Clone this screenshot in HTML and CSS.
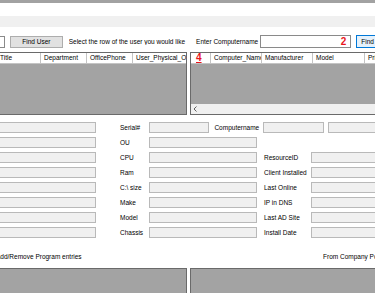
FILE: index.html
```html
<!DOCTYPE html>
<html lang="en">

<head>
  <meta charset="UTF-8" />
  <title>Computer lookup</title>
  <meta name="viewport" content="width=device-width, initial-scale=1.0" />
  <link rel="stylesheet" href="styles.css">
</head>

<body>
  <div class="window">
    <div class="titlebar"></div>
    <div class="menu"></div>

    <div class="search">
      <div class="textbox user"></div>
      <button class="btn find-user">Find User</button>
      <span class="hint">Select the row of the user you would like me</span>
      <span class="label-computer">Enter Computername</span>
      <div class="textbox computer"><span class="mark">2</span></div>
      <button class="btn find focused">Find</button>
    </div>

    <div class="grids">
      <div class="grid users">
        <div class="head">
          <div class="col w44">Title</div>
          <div class="col w46">Department</div>
          <div class="col w46">OfficePhone</div>
          <div class="col w56">User_Physical_Office</div>
        </div>
        <div class="body"></div>
      </div>
      <div class="grid computers">
        <div class="head">
          <div class="col rowhead"><span class="mark under">4</span></div>
          <div class="col w51">Computer_Name</div>
          <div class="col w51">Manufacturer</div>
          <div class="col w52">Model</div>
          <div class="col w51">Primary</div>
        </div>
        <div class="body"></div>
        <div class="hscroll">
          <svg class="arrow" width="4" height="6" viewBox="0 0 4 6"><path d="M3.5 0.5 L1 3 L3.5 5.5" fill="none" stroke="#606060" stroke-width="1"/></svg>
        </div>
      </div>
    </div>

    <div class="form">
      <div class="box"></div><span class="lbl">Serial#</span>
      <div class="split">
        <div class="box s1"></div>
        <span class="lbl cn">Computername</span>
        <div class="box s2"></div>
        <div class="box s3"></div>
      </div>

      <div class="box"></div><span class="lbl">OU</span>
      <div class="box wide"></div>

      <div class="box"></div><span class="lbl">CPU</span>
      <div class="box"></div><span class="lbl">ResourceID</span><div class="box"></div>

      <div class="box"></div><span class="lbl">Ram</span>
      <div class="box"></div><span class="lbl">Client Installed</span><div class="box"></div>

      <div class="box"></div><span class="lbl">C:\ size</span>
      <div class="box"></div><span class="lbl">Last Online</span><div class="box"></div>

      <div class="box"></div><span class="lbl">Make</span>
      <div class="box"></div><span class="lbl">IP in DNS</span><div class="box"></div>

      <div class="box"></div><span class="lbl">Model</span>
      <div class="box"></div><span class="lbl">Last AD Site</span><div class="box"></div>

      <div class="box"></div><span class="lbl">Chassis</span>
      <div class="box"></div><span class="lbl">Install Date</span><div class="box"></div>
    </div>

    <div class="captions">
      <span>Add/Remove Program entries</span>
      <span class="right">From Company Po</span>
    </div>

    <div class="grids bottom">
      <div class="grid users"></div>
      <div class="grid computers"></div>
    </div>
  </div>
</body>

</html>
```

FILE: styles.css
```css
:root {
  /* grid background */
  --grid-bg: #a3a3a3;
  /* grid border */
  --grid-border: #6a6a6a;
  /* read only text box */
  --box-bg: #f0f0f0;
  --box-border: #b9b9b9;
  /* annotation */
  --mark: #e8141c;
}

body {
  margin: 0;
  overflow: hidden;
  background: #fff;
  font-family: "Liberation Sans", Arial, sans-serif;
  font-size: 6.5px;
  color: #000;
}

/* the window is wider than the view, cut on the left */
.window {
  margin-left: -4px;
  width: 420px;
  height: 293px;
  overflow: hidden;
}

.titlebar {
  height: 3px;
  background: #a2a2a2;
  margin-bottom: 13px;
}

.menu {
  height: 11px;
  background: #f0f0f0;
}

/* search row */
.search {
  display: flex;
  align-items: center;
  height: 13px;
  margin-top: 8px;
  white-space: nowrap;
}

.textbox {
  height: 11px;
  background: #fff;
  border: 1px solid #8a8a8a;
  box-sizing: border-box;
}

.textbox.user {
  width: 9px;
  height: 12px;
}

.btn {
  font: inherit;
  height: 12px;
  padding: 0;
  background: #e1e1e1;
  border: 1px solid #adadad;
  color: #000;
}

.find-user {
  width: 53px;
  margin-left: 5px;
}

.hint {
  width: 118px;
  margin-left: 6px;
  overflow: hidden;
}

.label-computer {
  margin-left: 10px;
  width: 64px;
}

.textbox.computer {
  width: 92px;
  height: 13px;
  display: flex;
  justify-content: flex-end;
  align-items: center;
  padding-right: 4px;
}

.mark {
  color: var(--mark);
  font-weight: 700;
  font-size: 10px;
  line-height: 1;
}

.mark.under {
  text-decoration: underline;
  text-decoration-thickness: 1px;
}

.find {
  margin-left: 5px;
  width: 60px;
  height: 13px;
  text-align: left;
  padding-left: 4px;
}

.btn.focused {
  background: #e5f1fb;
  border-color: #0078d7;
}

/* data grids */
.grids {
  display: flex;
  gap: 3px;
  margin-top: 4px;
  height: 63px;
}

.grid {
  border: 1px solid var(--grid-border);
  background: var(--grid-bg);
  display: flex;
  flex-direction: column;
  overflow: hidden;
}

.grid.users {
  width: 191px;
  box-sizing: border-box;
}

.grid.computers {
  flex: 1;
}

.grid .head {
  display: flex;
  height: 11px;
  background: #fff;
  white-space: nowrap;
}

.grid .col {
  flex: none;
  overflow: hidden;
  padding-left: 3px;
  box-sizing: border-box;
  border-right: 1px solid #c4c4c4;
  border-bottom: 1px solid #c4c4c4;
  line-height: 10px;
}

.col.w44 { width: 44px; }
.col.w46 { width: 46px; }
.col.w51 { width: 51px; }
.col.w52 { width: 52px; }
.col.w56 { width: 56px; }

.col.rowhead {
  width: 20px;
  padding-left: 5px;
}

.grid .body {
  flex: 1;
}

.hscroll {
  height: 10px;
  background: #f0f0f0;
  display: flex;
  align-items: center;
}

.hscroll .arrow {
  margin-left: 2px;
}

/* details form */
.form {
  display: grid;
  grid-template-columns: 100px 24px 29px 108px 7px 47px 75px;
  grid-auto-rows: 11px;
  row-gap: 4px;
  margin-top: 7px;
  align-items: center;
  white-space: nowrap;
}

.box {
  height: 11px;
  background: var(--box-bg);
  border: 1px solid var(--box-border);
  box-sizing: border-box;
}

.form > .lbl {
  grid-column: 3;
}

.form > .box + .lbl + .box {
  grid-column: 4;
}

.form > .box + .lbl + .box + .lbl {
  grid-column: 6;
}

.form > .box + .lbl + .box + .lbl + .box {
  grid-column: 7;
}

.form > .box:not(.lbl + .box) {
  grid-column: 1;
}

.form > .box.wide {
  grid-column: 4 / 8;
}

.split {
  grid-column: 4 / 8;
  display: flex;
  align-items: center;
}

.split .s1 { width: 62px; }
.split .s2 { width: 62px; }
.split .s3 { width: 60px; margin-left: 4px; }

.split .cn {
  margin-left: 5px;
  width: 50px;
}

/* bottom */
.captions {
  display: flex;
  justify-content: space-between;
  margin-top: 14px;
  height: 10px;
  line-height: 10px;
  width: 379px;
  white-space: nowrap;
}

.captions .right {
  width: 52px;
  overflow: hidden;
}

.grids.bottom {
  margin-top: 6px;
  height: 30px;
}

.grids.bottom .grid {
  border-bottom: none;
}
```
